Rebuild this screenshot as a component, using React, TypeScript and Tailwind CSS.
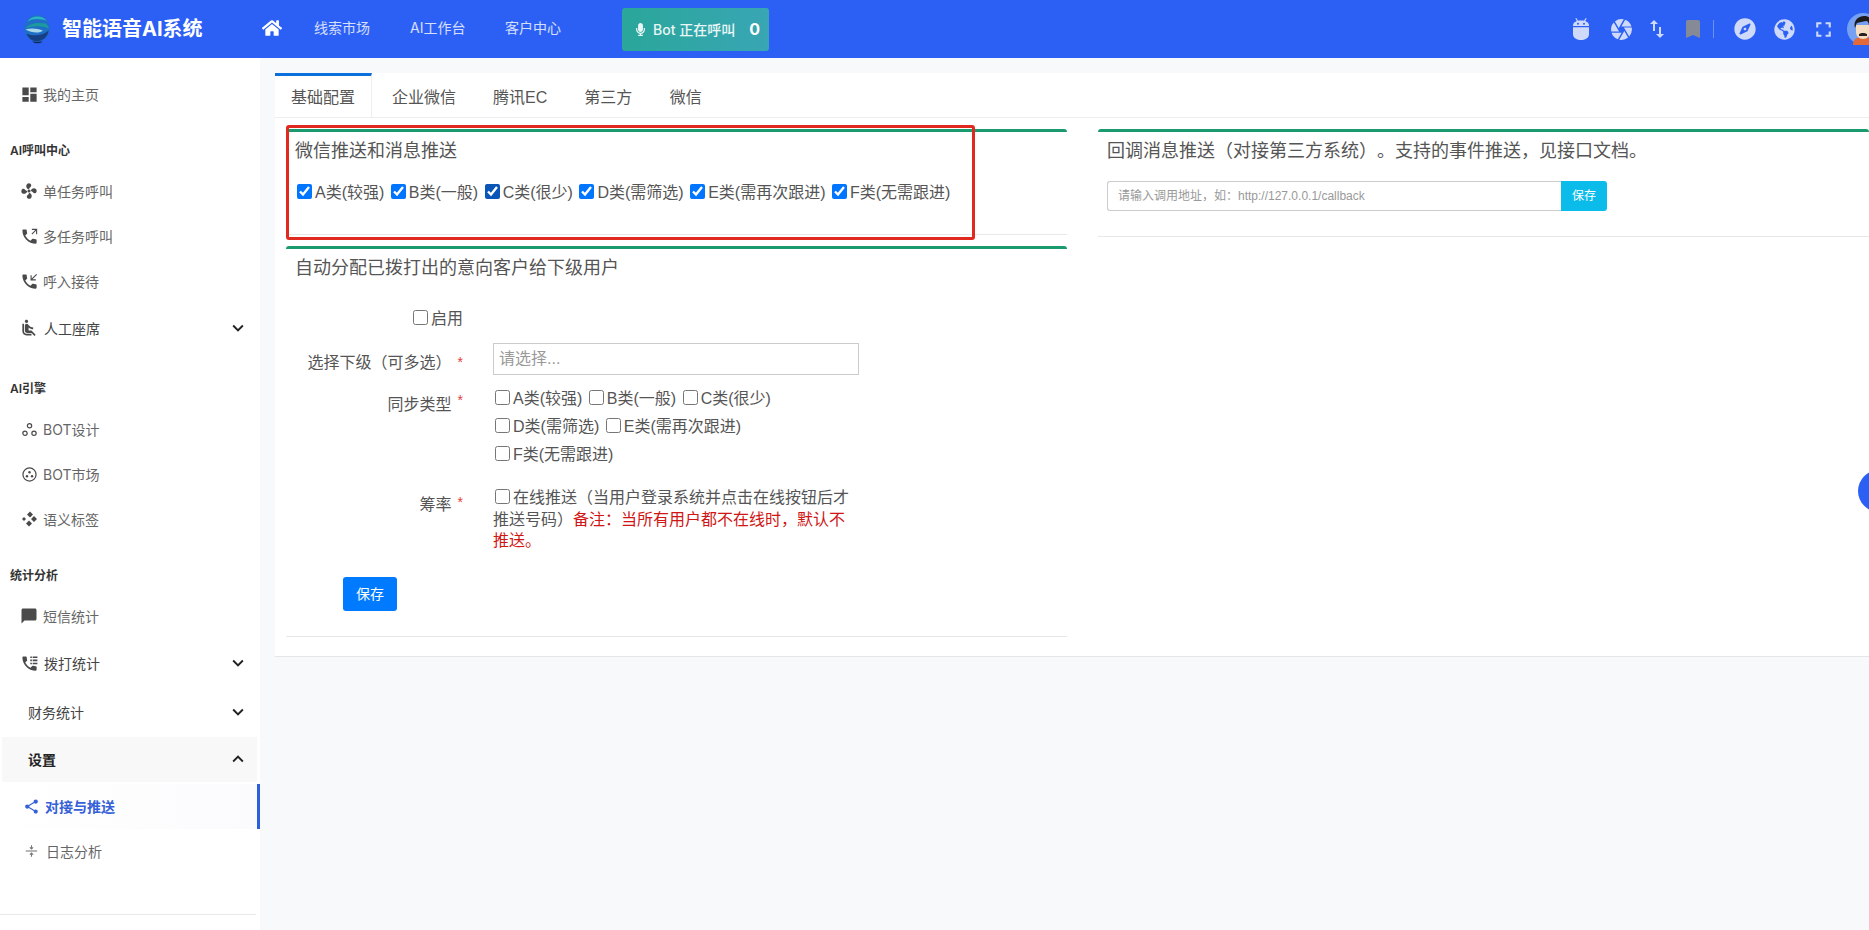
import React from "react";
import { FaHome, FaMicrophone, FaCompass, FaGlobeAmericas } from "react-icons/fa";
import { MdCamera, MdSwapVert, MdBookmark, MdFullscreen, MdDashboard, MdAirlineSeatReclineNormal, MdChatBubble, MdShare, MdKeyboardArrowDown, MdKeyboardArrowUp } from "react-icons/md";

const CALL = "M6.62 10.79c1.44 2.83 3.76 5.14 6.59 6.59l2.2-2.2c.27-.27.67-.36 1.02-.24 1.12.37 2.33.57 3.57.57.55 0 1 .45 1 1V20c0 .55-.45 1-1 1-9.39 0-17-7.61-17-17 0-.55.45-1 1-1h3.5c.55 0 1 .45 1 1 0 1.25.2 2.45.57 3.57.11.35.03.74-.25 1.02l-2.2 2.2z";

const Fan = () => (
  <svg viewBox="0 0 24 24" className="w-[18px] h-[18px] shrink-0" fill="currentColor">
    <circle cx="12" cy="12" r="2" />
    <path d="M11 9.500C8 8 7.500 4.500 9.500 2.500c2-1.500 5.500-.5 5.500 2 0 2-2.500 2.500-3 5z" />
    <path d="M14.500 11c1.500-3 5-3.500 7-1.500 1.500 2 .5 5.500-2 5.500-2 0-2.500-2.500-5-3z" />
    <path d="M13 14.500c3 1.500 3.500 5 1.500 7-2 1.500-5.500.5-5.500-2 0-2 2.500-2.500 3-5z" />
    <path d="M9.500 13c-1.500 3-5 3.500-7 1.500-1.500-2-.5-5.500 2-5.500 2 0 2.500 2.500 5 3z" />
  </svg>
);
const PhoneOut = () => (
  <svg viewBox="0 0 24 24" className="w-[19px] h-[19px] shrink-0" fill="currentColor">
    <path d={CALL} />
    <path d="M15 3h6v6M21 3l-6 6" fill="none" stroke="currentColor" strokeWidth="1.400" />
  </svg>
);
const PhoneIn = () => (
  <svg viewBox="0 0 24 24" className="w-[19px] h-[19px] shrink-0" fill="currentColor">
    <path d={CALL} />
    <path d="M14 4v6h6M14 10l7-7" fill="none" stroke="currentColor" strokeWidth="1.400" />
  </svg>
);
const PhoneList = () => (
  <svg viewBox="0 0 24 24" className="w-[19px] h-[19px] shrink-0" fill="currentColor">
    <path d={CALL} />
    <path d="M13 3h2v2h-2zM16 3h6v2h-6zM13 7h2v2h-2zM16 7h6v2h-6zM13 11h2v2h-2zM16 11h6v2h-6z" />
  </svg>
);
const Bubbles = () => (
  <svg viewBox="0 0 16 16" className="w-[15px] h-[15px] shrink-0" fill="none" stroke="currentColor" strokeWidth="1.300">
    <circle cx="8" cy="4" r="2.300" />
    <circle cx="3.200" cy="12" r="2.300" />
    <circle cx="12.800" cy="12" r="2.300" />
  </svg>
);
const Dots = () => (
  <svg viewBox="0 0 16 16" className="w-[15px] h-[15px] shrink-0" fill="currentColor">
    <circle cx="8" cy="8" r="7" fill="none" stroke="currentColor" strokeWidth="1.300" />
    <circle cx="8" cy="5.500" r="1.300" />
    <circle cx="5.300" cy="9.800" r="1.300" />
    <circle cx="10.700" cy="9.800" r="1.300" />
  </svg>
);
const Diamonds = () => (
  <svg viewBox="0 0 16 16" className="w-[16px] h-[16px] shrink-0" fill="currentColor">
    <path d="M9 .5l3 3-3 3-3-3zM13 5l3 3-3 3-3-3zM8 9.500l3 3-3 3-3-3zM3 6l2 2-2 2-2-2z" />
  </svg>
);
const Divide = () => (
  <svg viewBox="0 0 16 16" className="w-[13px] h-[16px] shrink-0" fill="none" stroke="currentColor" strokeWidth="1.300">
    <path d="M1 8h14" />
    <path d="M8 1v3.500M6 3.500l2 2 2-2M8 15v-3.500M6 12.500l2-2 2 2" />
  </svg>
);
const AndroidBot = () => (
  <svg viewBox="0 0 16 22" className="w-[16px] h-[22px] shrink-0" fill="currentColor">
    <path d="M3.300 0l2 3.200-1 .6-2-3.200zM12.700 0l-2 3.200 1 .6 2-3.200z" />
    <path d="M0 7.500C0 4.500 3 2.500 8 2.500s8 2 8 5V8H0z" />
    <path d="M0 9.200h16V16c0 3.500-3 6-8 6s-8-2.500-8-6z" />
    <circle cx="5" cy="5.800" r="1" fill="#2c60f5" />
    <circle cx="11" cy="5.800" r="1" fill="#2c60f5" />
  </svg>
);
const Logo = () => (
  <svg viewBox="0 0 28 32" className="w-[28px] h-[31px] shrink-0">
    <ellipse cx="14" cy="15" rx="13" ry="14" fill="#1f6fc6" />
    <path d="M4 8C8 1 20 1 24 7c-5-2-14-3-20 1z" fill="#2bb5c4" />
    <path d="M2 15c3-5 13-7 21-5 2 1 3 3 3 5-6-3-16-3-24 0z" fill="#1c9a9e" />
    <path d="M2 16c6-2 13-1 18 1-3 3-11 3-18-1z" fill="#a9d8ea" />
    <path d="M3 20c6 3 16 3 23-3-1 7-6 11-12 11-5 0-9-3-11-8z" fill="#173f86" />
    <path d="M9 28c3 3 8 3 11 0-3 1-8 1-11 0z" fill="#12285a" />
  </svg>
);
const Avatar = () => (
  <svg viewBox="0 0 32 32" className="w-[32px] h-[32px] shrink-0">
    <circle cx="16" cy="16" r="16" fill="#76a0f2" />
    <path d="M6 32c0-6 4-8 10-8s10 2 10 8z" fill="#e2693a" />
    <path d="M9 12h14v7c0 4-3 7-7 7s-7-3-7-7z" fill="#f6dcc0" />
    <path d="M8 15c-2-7 3-12 9-12s9 4 7 11l-2-1c0-3-1-5-3-5-3 1-7 1-9 2-1 1-1 3-2 5z" fill="#1d1a1b" />
    <path d="M12 21c2-1.500 6-1.500 8 0v2h-8z" fill="#2a2020" />
  </svg>
);

const Item = ({ label, icon, h, arrow, gap }: { label: string; icon?: React.ReactNode; h: string; arrow?: boolean; gap: string }) => (
  <div className={`flex items-center pl-[22px] pr-[11px] text-[14px] ${h} ${arrow ? "text-[#444]" : "text-[#666]"}`}>
    {icon && <span className={`flex justify-center w-[14px] text-[#4a4a4a] ${gap}`}>{icon}</span>}
    <span className={icon ? "" : "pl-[6px]"}>{label}</span>
    {arrow && <MdKeyboardArrowDown className="ml-auto text-[#222] text-[22px]" />}
  </div>
);
const Heading = ({ label, h, pb }: { label: string; h: string; pb: string }) => (
  <div className={`flex items-end pl-[10px] text-[12px] leading-[16px] font-semibold text-[#333] ${h} ${pb}`}>{label}</div>
);

const Check = ({ label, checked, tone, className }: { label: string; checked?: boolean; tone?: string; className?: string }) => (
  <label className={`inline-flex items-center text-[16px] text-[#555] ${className ?? ""}`}>
    <input type="checkbox" defaultChecked={checked} className={`w-[15px] h-[15px] m-0 mb-[3px] mr-[3px] ${tone ?? "accent-[#0075ff]"}`} />
    {label}
  </label>
);
const Star = () => <span className="text-[#e2403a] text-[14px] leading-[16px] ml-[6px] mt-[3px] self-start">*</span>;

const Card = ({ title, className, children }: { title: string; className: string; children?: React.ReactNode }) => (
  <div className={`border-t-[3px] border-t-[#1a9b6e] border-b border-b-[#e8e8e8] rounded-t-[3px] ${className}`}>
    <h3 className="text-[18px] leading-[24px] font-normal text-[#555] pl-[9px] pt-[7px] [text-spacing-trim:space-all]">{title}</h3>
    {children}
  </div>
);

export default function App() {
  return (
    <div className="w-full h-[930px] overflow-hidden bg-[#f7f9fb] font-['Inter','Noto_Sans_CJK_SC',sans-serif]">
      <header className="flex items-center h-[58px] bg-[#2c60f5] text-white w-[1885px]">
        <div className="flex items-center w-[262px] pl-[23px] shrink-0">
          <Logo />
          <span className="ml-[11px] text-[20px] font-bold whitespace-nowrap">智能语音AI系统</span>
        </div>
        <FaHome className="text-[20px] w-[20px] shrink-0 mb-[2px]" />
        <nav className="flex text-[14px] text-white/80 pb-[4px] shrink-0">
          <span className="ml-[32px] w-[56px] whitespace-nowrap">线索市场</span>
          <span className="ml-[40px] w-[56px] whitespace-nowrap">AI工作台</span>
          <span className="ml-[39px] w-[56px] whitespace-nowrap">客户中心</span>
        </nav>
        <div className="ml-[61px] flex items-center w-[147px] h-[43px] shrink-0 rounded-[3px] bg-gradient-to-r from-[#2aa69a] to-[#38a6b4] pl-[12px] font-medium">
          <FaMicrophone className="text-[13px] w-[13px] text-white/90" />
          <span className="ml-[6px] text-[14px] whitespace-nowrap text-white/90">Bot 正在呼叫</span>
          <span className="ml-[14px] text-[16px] font-bold">0</span>
        </div>
        <div className="flex items-center shrink-0 text-[#cfdafb]">
          <span className="ml-[804px] shrink-0"><AndroidBot /></span>
          <MdCamera className="ml-[20px] text-[25px] shrink-0" />
          <MdSwapVert className="ml-[11px] text-[24px] shrink-0" />
          <MdBookmark className="ml-[12px] text-[24px] text-[#868a96] shrink-0" />
          <span className="ml-[8px] w-px h-[18px] bg-white/30 shrink-0" />
          <FaCompass className="ml-[20px] text-[22px] shrink-0" />
          <FaGlobeAmericas className="ml-[18px] text-[21px] shrink-0" />
          <MdFullscreen className="ml-[16px] text-[25px] shrink-0" />
          <span className="ml-[11px] shrink-0"><Avatar /></span>
        </div>
      </header>

      <div className="flex h-[872px]">
        <aside className="w-[260px] shrink-0 bg-white pt-[13.5px] overflow-hidden">
          <Item label="我的主页" h="h-[45px]" gap="mr-[7px]" icon={<MdDashboard className="text-[19px] shrink-0" />} />
          <Heading label="AI呼叫中心" h="h-[52px]" pb="pb-[10px]" />
          <Item label="单任务呼叫" h="h-[45px]" gap="mr-[7px]" icon={<Fan />} />
          <Item label="多任务呼叫" h="h-[45px]" gap="mr-[7px]" icon={<PhoneOut />} />
          <Item label="呼入接待" h="h-[45px]" gap="mr-[7px]" icon={<PhoneIn />} />
          <Item label="人工座席" h="h-[49px]" gap="mr-[8px]" arrow icon={<MdAirlineSeatReclineNormal className="text-[20px] shrink-0" />} />
          <Heading label="AI引擎" h="h-[54px]" pb="pb-[10px]" />
          <Item label="BOT设计" h="h-[45px]" gap="mr-[7px]" icon={<Bubbles />} />
          <Item label="BOT市场" h="h-[45px]" gap="mr-[7px]" icon={<Dots />} />
          <Item label="语义标签" h="h-[45px]" gap="mr-[7px]" icon={<Diamonds />} />
          <Heading label="统计分析" h="h-[52px]" pb="pb-[10px]" />
          <Item label="短信统计" h="h-[45px]" gap="mr-[7px]" icon={<MdChatBubble className="text-[18px] shrink-0" />} />
          <Item label="拨打统计" h="h-[49px]" gap="mr-[8px]" arrow icon={<PhoneList />} />
          <Item label="财务统计" h="h-[49px]" gap="mr-0" arrow />
          <div className="flex items-center h-[45px] ml-[2px] mr-[3px] bg-[#f8f8f8] pl-[26px] pr-[8px] text-[14px] font-semibold text-[#222]">
            设置
            <MdKeyboardArrowUp className="ml-auto text-[#222] text-[22px]" />
          </div>
          <div className="flex items-center h-[45px] mt-[2px] pl-[24px] text-[14px] font-semibold text-[#3560d8] bg-gradient-to-r from-white to-[#fbfbfd] border-r-[3px] border-r-[#2c5fdc]">
            <span className="w-[14px] mr-[7px] flex justify-center"><MdShare className="text-[17px] shrink-0" /></span>
            对接与推送
          </div>
          <div className="flex items-center h-[45px] pl-[25px] text-[14px] text-[#666]">
            <span className="w-[12px] mr-[9px] flex justify-center text-[#777]"><Divide /></span>
            日志分析
          </div>
          <div className="mt-[40px] mr-[4px] border-t border-t-[#e8e8e8]" />
        </aside>

        <main className="flex-1 min-w-0 pl-[15px] pt-[15px] relative">
          <section className="bg-white border-b border-b-[#e4e6ea] font-['Liberation_Sans','Noto_Sans_CJK_SC',sans-serif]">
            <div className="flex h-[45px] border-b border-b-[#eeeeee] text-[16px] text-[#555]">
              <div className="flex items-center pt-[2px] px-[16px] border-t-[3px] border-t-[#0b6fdc] border-r border-r-[#eeeeee] mr-[1px]">基础配置</div>
              <div className="flex items-center pt-[5px] px-[19px]">企业微信</div>
              <div className="flex items-center pt-[5px] px-[18px]">腾讯EC</div>
              <div className="flex items-center pt-[5px] px-[19px]">第三方</div>
              <div className="flex items-center pt-[5px] px-[18.5px]">微信</div>
            </div>

            <div className="flex pl-[11px] pt-[11px] pb-[19px]">
              <div className="w-[781px] shrink-0">
                <div className="relative">
                  <Card title="微信推送和消息推送" className="h-[106px]">
                    <div className="flex pl-[11px] mt-[16px] gap-[6.5px] h-[28px] items-center">
                      <Check label="A类(较强)" checked />
                      <Check label="B类(一般)" checked />
                      <Check label="C类(很少)" checked tone="accent-[#0a56b8]" />
                      <Check label="D类(需筛选)" checked />
                      <Check label="E类(需再次跟进)" checked />
                      <Check label="F类(无需跟进)" checked />
                    </div>
                  </Card>
                  <div className="absolute -top-[4px] left-0 w-[689px] h-[115px] border-[3px] border-[#e02a20] rounded-[3px] pointer-events-none" />
                </div>
                <Card title="自动分配已拨打出的意向客户给下级用户" className="mt-[11px] h-[391px]">
                  <div className="mt-[27px] flex justify-end w-[177px] h-[24px] items-center">
                    <Check label="启用" />
                  </div>
                  <div className="mt-[12px] flex items-center h-[32px] text-[16px] text-[#555]">
                    <div className="w-[177px] flex justify-end items-center pt-[7px]">选择下级（可多选）<Star /></div>
                    <input placeholder="请选择..." className="ml-[30px] w-[366px] h-[32px] border border-[#ccc] px-[5px] outline-none placeholder:text-[#999]" />
                  </div>
                  <div className="mt-[10px] flex text-[16px] text-[#555]">
                    <div className="w-[177px] flex justify-end pt-[4px] leading-[24px] h-[36px] items-center">同步类型<Star /></div>
                    <div className="ml-[32px] w-[364px]">
                      <div className="h-[28px] flex items-center gap-[6.5px]">
                        <Check label="A类(较强)" />
                        <Check label="B类(一般)" />
                        <Check label="C类(很少)" />
                      </div>
                      <div className="h-[28px] flex items-center gap-[6.5px]">
                        <Check label="D类(需筛选)" />
                        <Check label="E类(需再次跟进)" />
                      </div>
                      <div className="h-[28px] flex items-center">
                        <Check label="F类(无需跟进)" />
                      </div>
                    </div>
                  </div>
                  <div className="mt-[18px] flex text-[16px] text-[#555] leading-[21.5px]">
                    <div className="w-[177px] flex justify-end pt-[4px] h-[32px] items-center">筹率<Star /></div>
                    <p className="ml-[30px] w-[366px]">
                      <input type="checkbox" className="w-[15px] h-[15px] ml-[2px] mr-[3px] align-[-1px]" />
                      在线推送（当用户登录系统并点击在线按钮后才推送号码）
                      <span className="text-[#d01515]">备注：当所有用户都不在线时，默认不推送。</span>
                    </p>
                  </div>
                  <button className="ml-[57px] mt-[25.5px] w-[54px] h-[34px] rounded-[3px] bg-[#007bff] text-white text-[14px]">保存</button>
                </Card>
              </div>
              <div className="ml-[31px] flex-1 min-w-0">
                <Card title="回调消息推送（对接第三方系统）。支持的事件推送，见接口文档。" className="h-[108px]">
                  <div className="flex ml-[9px] mt-[18px] h-[30px] w-[500px]">
                    <input placeholder="请输入调用地址，如：http://127.0.0.1/callback" className="flex-1 min-w-0 h-[30px] border border-[#ccc] border-r-0 rounded-l-[3px] px-[10px] text-[12px] outline-none placeholder:text-[#999]" />
                    <button className="w-[46px] h-[30px] bg-[#0bbcea] rounded-r-[3px] text-white text-[12px]">保存</button>
                  </div>
                </Card>
              </div>
            </div>
          </section>
          <div className="absolute left-[1598px] top-[412px] w-[42px] h-[42px] rounded-full bg-[#2c60f5]" />
        </main>
      </div>
    </div>
  );
}
